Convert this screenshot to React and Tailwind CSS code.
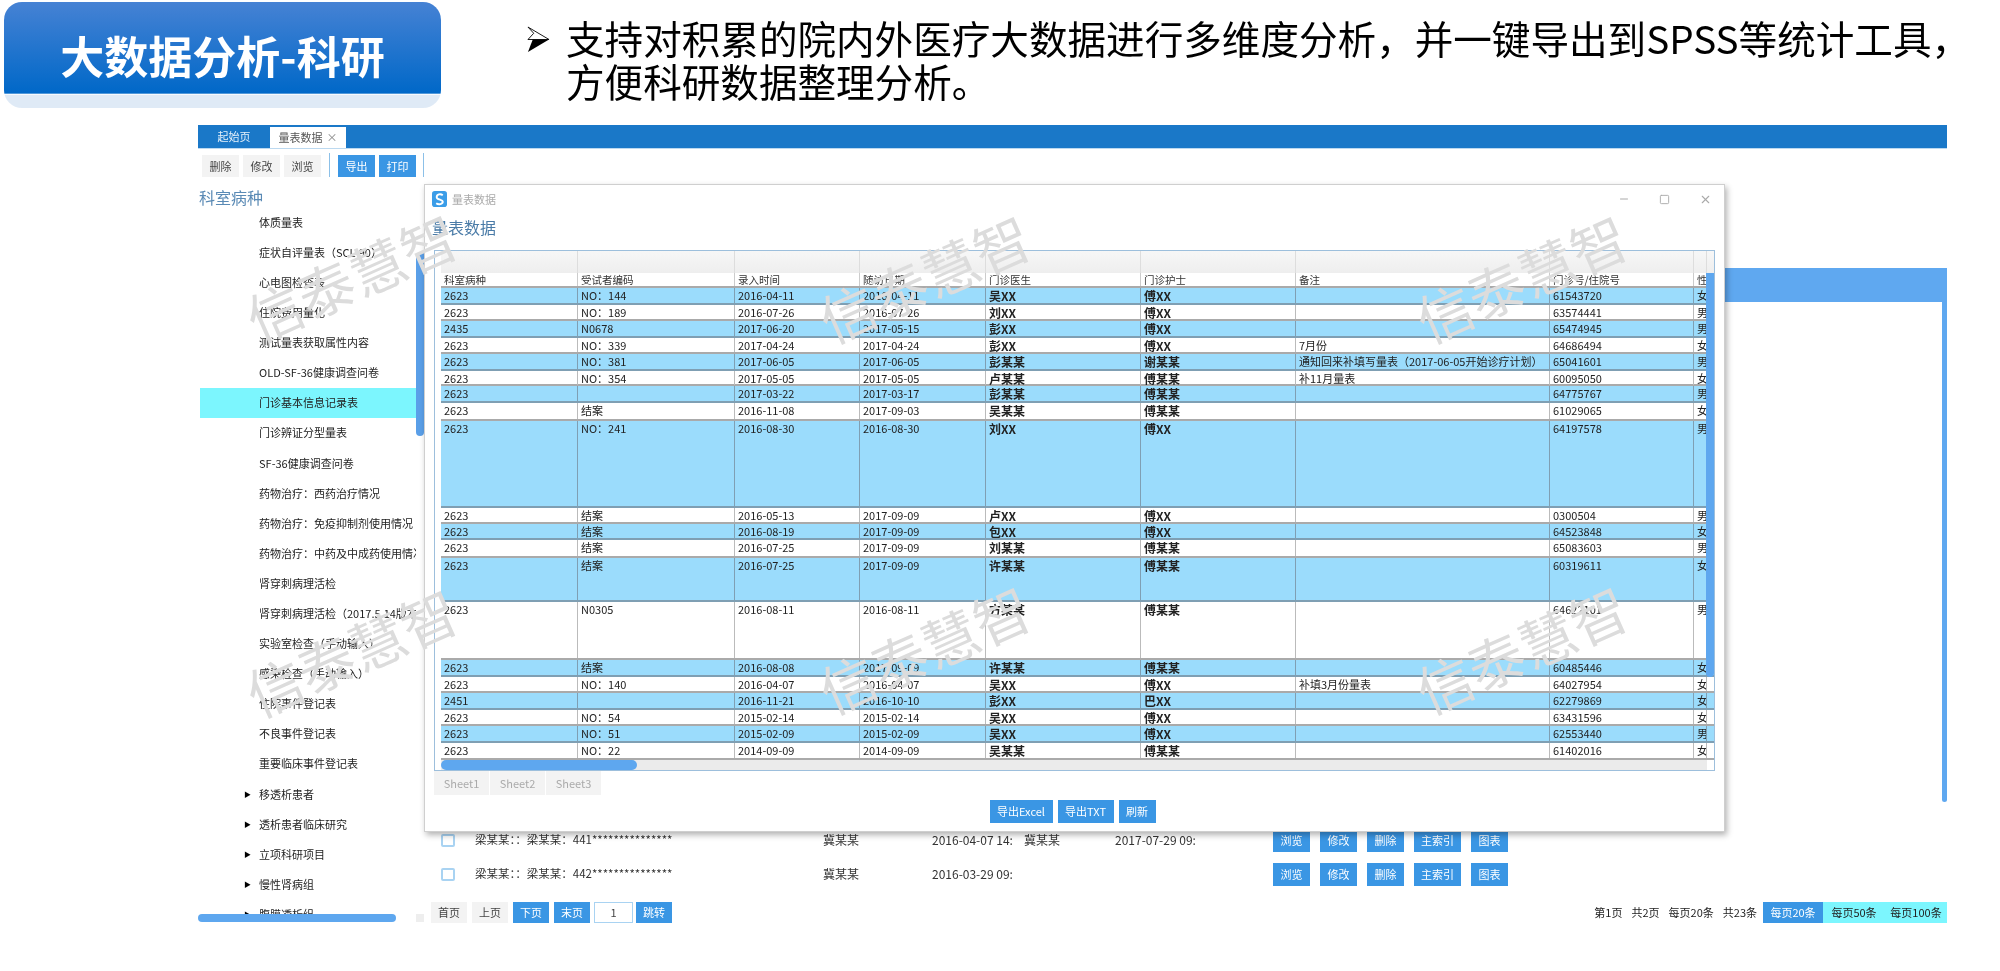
import React from "react";
import { Minus, Square, X } from "lucide-react";

const sidebar = [
  ["体质量表"], ["症状自评量表（SCL-90）"], ["心电图检查表"], ["住院费用量化"], ["测试量表获取属性内容"],
  ["OLD-SF-36健康调查问卷"], ["门诊基本信息记录表", "sel"], ["门诊辨证分型量表"], ["SF-36健康调查问卷"],
  ["药物治疗：西药治疗情况"], ["药物治疗：免疫抑制剂使用情况"], ["药物治疗：中药及中成药使用情况"], ["肾穿刺病理活检"],
  ["肾穿刺病理活检（2017.5.14版本）"], ["实验室检查（手动输入）"], ["感染检查（手动输入）"], ["住院事件登记表"],
  ["不良事件登记表"], ["重要临床事件登记表"], ["移透析患者", "arrow"], ["透析患者临床研究", "arrow"],
  ["立项科研项目", "arrow"], ["慢性肾病组", "arrow"], ["腹膜透析组", "arrow"],
];

const rows = [
  ["h-[17px]", "2623", "NO：144", "2016-04-11", "2016-04-11", "吴XX", "傅XX", "", "61543720", "女"],
  ["h-[16px]", "2623", "NO：189", "2016-07-26", "2016-07-26", "刘XX", "傅XX", "", "63574441", "男"],
  ["h-[17px]", "2435", "N0678", "2017-06-20", "2017-05-15", "彭XX", "傅XX", "", "65474945", "男"],
  ["h-[16px]", "2623", "NO：339", "2017-04-24", "2017-04-24", "彭XX", "傅XX", "7月份", "64686494", "女"],
  ["h-[17px]", "2623", "NO：381", "2017-06-05", "2017-06-05", "彭某某", "谢某某", "通知回来补填写量表（2017-06-05开始诊疗计划）", "65041601", "男"],
  ["h-[15px]", "2623", "NO：354", "2017-05-05", "2017-05-05", "卢某某", "傅某某", "补11月量表", "60095050", "女"],
  ["h-[17px]", "2623", "", "2017-03-22", "2017-03-17", "彭某某", "傅某某", "", "64775767", "男"],
  ["h-[18px]", "2623", "结案", "2016-11-08", "2017-09-03", "吴某某", "傅某某", "", "61029065", "女"],
  ["h-[87px]", "2623", "NO：241", "2016-08-30", "2016-08-30", "刘XX", "傅XX", "", "64197578", "男"],
  ["h-[16px]", "2623", "结案", "2016-05-13", "2017-09-09", "卢XX", "傅XX", "", "0300504", "男"],
  ["h-[16px]", "2623", "结案", "2016-08-19", "2017-09-09", "包XX", "傅XX", "", "64523848", "女"],
  ["h-[18px]", "2623", "结案", "2016-07-25", "2017-09-09", "刘某某", "傅某某", "", "65083603", "男"],
  ["h-[44px]", "2623", "结案", "2016-07-25", "2017-09-09", "许某某", "傅某某", "", "60319611", "女"],
  ["h-[58px]", "2623", "N0305", "2016-08-11", "2016-08-11", "方某某", "傅某某", "", "64622101", "男"],
  ["h-[17px]", "2623", "结案", "2016-08-08", "2017-09-09", "许某某", "傅某某", "", "60485446", "女"],
  ["h-[16px]", "2623", "NO：140", "2016-04-07", "2016-04-07", "吴XX", "傅XX", "补填3月份量表", "64027954", "女"],
  ["h-[17px]", "2451", "", "2016-11-21", "2016-10-10", "彭XX", "巴XX", "", "62279869", "女"],
  ["h-[16px]", "2623", "NO：54", "2015-02-14", "2015-02-14", "吴XX", "傅XX", "", "63431596", "女"],
  ["h-[17px]", "2623", "NO：51", "2015-02-09", "2015-02-09", "吴XX", "傅XX", "", "62553440", "男"],
  ["h-[17px]", "2623", "NO：22", "2014-09-09", "2014-09-09", "吴某某", "傅某某", "", "61402016", "女"],
];

const headers = ["科室病种", "受试者编码", "录入时间", "随访日期", "门诊医生", "门诊护士", "备注", "门诊号/住院号", "性别"];
const cols = "grid grid-cols-[137px_157px_125px_126px_155px_155px_254px_144px_13px]";

const watermarks = [
  "left-[351px] top-[276px]", "left-[924px] top-[277px]", "left-[1521px] top-[277px]",
  "left-[351px] top-[651px]", "left-[924px] top-[648px]", "left-[1521px] top-[648px]",
];

function Gray({ children }) {
  return <div className="flex h-[22px] w-[37px] items-center justify-center bg-[#f3f3f3] text-[11px] text-[#444]">{children}</div>;
}
function Blue({ children, className = "h-[22px] w-[37px]" }) {
  return <div className={`flex items-center justify-center bg-[#3a96e4] text-[11px] text-white ${className}`}>{children}</div>;
}

function Bullet() {
  return (
    <svg viewBox="0 0 24 28" className="mt-[24px] h-[27px] w-[23px] shrink-0">
      <path d="M1 1 L23 14 L1 14 L7 7.5 Z" fill="#fff" stroke="#111" strokeWidth="1" />
      <path d="M1 27 L23 14 L6 14 Z" fill="#000" />
    </svg>
  );
}

function ModalIcon() {
  return (
    <svg viewBox="0 0 16 17" className="h-[16px] w-[15px]">
      <rect x="0" y="0" width="16" height="17" rx="3" fill="#3b9de8" />
      <path d="M11.5 4.5C9 2.5 5 3.5 5 6.5S11.5 9 11.5 11.5 7 15 4.5 13" fill="none" stroke="#fff" strokeWidth="2" />
    </svg>
  );
}

function Sidebar() {
  return (
    <div className="relative flex h-[746px] w-[226px] shrink-0 flex-col">
      <div className="pt-[10px] pl-[1px] text-[16px] leading-[20px] text-[#5a8ab5]">科室病种</div>
      <div className="h-[707px] overflow-hidden">
        {sidebar.map(([t, kind]) => (
          <div
            key={t}
            className={
              kind === "sel"
                ? "ml-[2px] flex h-[30.1px] w-[216px] items-center overflow-hidden whitespace-nowrap bg-[#7cf6fe] pl-[59px] text-[11px] text-[#222]"
                : kind === "arrow"
                  ? "ml-[2px] flex h-[30.1px] w-[216px] items-center overflow-hidden whitespace-nowrap pl-[44px] text-[11px] text-[#222]"
                  : "ml-[2px] flex h-[30.1px] w-[216px] items-center overflow-hidden whitespace-nowrap pl-[59px] text-[11px] text-[#222]"
            }
          >
            {kind === "arrow" && <span className="w-[15px] text-[7px] text-black">▶</span>}
            {t}
          </div>
        ))}
      </div>
      <div className="flex h-[8px] items-center">
        <div className="h-[8px] w-[198px] rounded-full bg-[#5ea7ef]" />
        <div className="ml-[20px] h-[8px] w-[8px] bg-[#eee]" />
      </div>
      <div className="absolute right-0 top-[76px] h-[183px] w-[8px] rounded-b-[4px] bg-[#5a9fe8]" />
    </div>
  );
}

function ListRow({ text, date, name, date2 }) {
  const btns = [["浏览", "w-[37px]"], ["修改", "w-[37px]"], ["删除", "w-[37px]"], ["主索引", "w-[47px]"], ["图表", "w-[37px]"]];
  return (
    <div className="grid h-[34px] grid-cols-[34px_348px_109px_92px_91px_158px_auto] items-center pl-[17px] text-[12px] text-[#333]">
      <div className="h-[13px] w-[14px] rounded-[2px] border-2 border-[#a9d3f2] bg-white" />
      <div className="whitespace-nowrap text-[11.5px]">{text}</div>
      <div>冀某某</div>
      <div className="whitespace-nowrap">{date}</div>
      <div className="whitespace-nowrap">{name}</div>
      <div className="whitespace-nowrap">{date2}</div>
      <div className="flex gap-[10px] text-[11px]">
        {btns.map(([b, w]) => (
          <div key={b} className={`flex h-[23px] items-center justify-center bg-[#3a96e4] text-white ${w}`}>{b}</div>
        ))}
      </div>
    </div>
  );
}

function Main() {
  return (
    <div className="relative flex h-[746px] flex-1 flex-col pt-[91px]">
      <div className="h-[34px] bg-[#5fa8f0]" />
      <div className="flex-1" />
      <ListRow text="梁某某：：梁某某：441***************" date="2016-04-07 14:" name="冀某某" date2="2017-07-29 09:" />
      <ListRow text="梁某某：：梁某某：442***************" date="2016-03-29 09:" name="" date2="" />
      <div className="mt-[11px] flex h-[21px] items-center pl-[7px] text-[11px]">
        <div className="flex h-full w-[36px] items-center justify-center bg-[#f3f3f3] text-[#444]">首页</div>
        <div className="ml-[5px] flex h-full w-[36px] items-center justify-center bg-[#f3f3f3] text-[#444]">上页</div>
        <div className="ml-[5px] flex h-full w-[36px] items-center justify-center bg-[#3a96e4] text-white">下页</div>
        <div className="ml-[5px] flex h-full w-[36px] items-center justify-center bg-[#3a96e4] text-white">末页</div>
        <div className="ml-[4px] flex h-full w-[39px] items-center justify-center border border-[#a9d3f2] text-[#444]">1</div>
        <div className="ml-[3px] flex h-full w-[36px] items-center justify-center bg-[#3a96e4] text-white">跳转</div>
        <div className="ml-auto flex items-center gap-[9px] pr-[6px] text-[#222]">
          <span>第1页</span><span>共2页</span><span>每页20条</span><span>共23条</span>
        </div>
        <div className="flex h-full w-[60px] items-center justify-center bg-[#3a96e4] text-white">每页20条</div>
        <div className="flex h-full w-[62px] items-center justify-center bg-[#7cf6fe] text-[#222]">每页50条</div>
        <div className="flex h-full w-[62px] items-center justify-center bg-[#7cf6fe] text-[#222]">每页100条</div>
      </div>
      <div className="absolute right-0 top-[91px] h-[534px] w-[5px] rounded-b-[3px] bg-[#5fa8f0]" />
    </div>
  );
}

function Modal() {
  return (
    <div className="absolute left-[424px] top-[184px] flex h-[648px] w-[1301px] flex-col border border-[#cfcfcf] bg-white px-[9px] shadow-[2px_3px_6px_rgba(0,0,0,0.3)] blur-[0.6px]">
      <div className="-ml-[2px] flex h-[25px] items-center gap-[5px] pt-[3px] text-[11px] text-[#aaa]">
        <ModalIcon />
        <span>量表数据</span>
        <div className="ml-auto flex items-center gap-[29px] pr-[3px] text-[#aaa]">
          <Minus size={12} />
          <Square size={11} />
          <X size={13} />
        </div>
      </div>
      <div className="-ml-[2px] mt-[6px] text-[16px] leading-[22px] text-[#4a7ba7]">量表数据</div>
      <div className="relative mt-[12px] h-[521px] border border-[#9dbfdc] pl-[6px]">
        <div className={`${cols} h-[22px] bg-gradient-to-b from-[#f7f7f7] to-[#eeeeee]`}>
          {headers.map((h) => (
            <div key={h} className="border-r border-[#dddddd]" />
          ))}
        </div>
        <div className={`${cols} h-[15px] border-b-2 border-[#aaaaaa] bg-white text-[10.5px] leading-[13px] text-[#333]`}>
          {headers.map((h) => (
            <div key={h} className="overflow-x-clip whitespace-nowrap border-r border-[#cccccc] pl-[3px]">{h}</div>
          ))}
        </div>
        {rows.map(([h, ...cells], i) => (
          <div
            key={i}
            className={
              i % 2 === 0
                ? `${cols} ${h} border-b-2 border-[#7f9fb3] bg-[#9bdcfc] text-[11px] leading-[13px] text-[#222]`
                : `${cols} ${h} border-b-2 border-[#aaaaaa] bg-white text-[11px] leading-[13px] text-[#222]`
            }
          >
            {cells.map((c, j) => (
              <div
                key={j}
                className={
                  (i % 2 === 0
                    ? "overflow-x-clip whitespace-nowrap border-r border-[#7f9fb3] pl-[3px] pt-[1px] "
                    : "overflow-x-clip whitespace-nowrap border-r border-[#bbbbbb] pl-[3px] pt-[1px] ") +
                  (j === 4 || j === 5 ? "text-[12px] font-bold text-[#222]" : "")
                }
              >
                {c}
              </div>
            ))}
          </div>
        ))}
        <div className="h-[10px] w-[1266px] bg-[#ebebeb]">
          <div className="h-[10px] w-[196px] rounded-full bg-[#5ea7ef]" />
        </div>
        <div className="absolute right-0 top-[22px] h-[404px] w-[8px] rounded-b-[4px] bg-[#5ea7ef]" />
      </div>
      <div className="flex h-[24px] text-[11px] text-[#aaa]">
        {["Sheet1", "Sheet2", "Sheet3"].map((s) => (
          <div key={s} className="mr-[1px] flex w-[55px] items-center justify-center bg-[#f3f3f3]">{s}</div>
        ))}
      </div>
      <div className="mt-[5px] flex justify-center gap-[5px] pr-[4px]">
        <Blue className="h-[23px] w-[63px]">导出Excel</Blue>
        <Blue className="h-[23px] w-[56px]">导出TXT</Blue>
        <Blue className="h-[23px] w-[37px]">刷新</Blue>
      </div>
    </div>
  );
}

export default function App() {
  return (
    <div className="relative h-[971px] w-[2000px] overflow-hidden bg-white font-['Noto_Sans_CJK_SC','Noto_Sans',sans-serif]">
      <div className="flex h-[108px] pt-[2px] pl-[4px]">
        <div className="flex h-[106px] w-[437px] items-center justify-center rounded-[18px] bg-[linear-gradient(180deg,#4682d4_0%,#0068c8_86%,#ffffff_87%,#dfeaf6_88%,#dfeaf6_100%)] text-[44px] font-bold text-white blur-[0.4px]">
          大数据分析-科研
        </div>
        <div className="ml-[86px] flex text-black">
          <Bullet />
          <div className="ml-[16px] mt-[14px] whitespace-nowrap text-[38.6px] leading-[43px] blur-[0.3px]">
            <div>支持对积累的院内外医疗大数据进行多维度分析，并一键导出到SPSS等统计工具，</div>
            <div>方便科研数据整理分析。</div>
          </div>
        </div>
      </div>

      <div className="ml-[198px] mt-[17px] flex h-[798px] w-[1749px] flex-col overflow-hidden blur-[0.6px]">
        <div className="flex h-[24px] shrink-0 border-b border-[#bcd9f0] bg-[#1a78c8] text-[11px]">
          <div className="flex w-[72px] items-center justify-center text-[#e4f0fa]">起始页</div>
          <div className="mt-[2px] flex w-[76px] items-center justify-center gap-[4px] bg-white text-[#555]">量表数据 <span className="text-[#888]">×</span></div>
        </div>
        <div className="flex h-[28px] shrink-0 items-end gap-[4px] pl-[4px]">
          <Gray>删除</Gray>
          <Gray>修改</Gray>
          <Gray>浏览</Gray>
          <div className="mx-[4px] h-[24px] w-px bg-[#8cc0e8]" />
          <Blue>导出</Blue>
          <Blue>打印</Blue>
          <div className="ml-[3px] h-[24px] w-px bg-[#8cc0e8]" />
        </div>
        <div className="flex flex-1">
          <Sidebar />
          <Main />
        </div>
      </div>

      <Modal />

      {watermarks.map((w) => (
        <div
          key={w}
          className={`pointer-events-none absolute -translate-x-1/2 -translate-y-1/2 -rotate-[24deg] whitespace-nowrap text-[56px] leading-none text-[#dcdcdc] ${w}`}
        >
          信泰慧智
        </div>
      ))}
    </div>
  );
}
